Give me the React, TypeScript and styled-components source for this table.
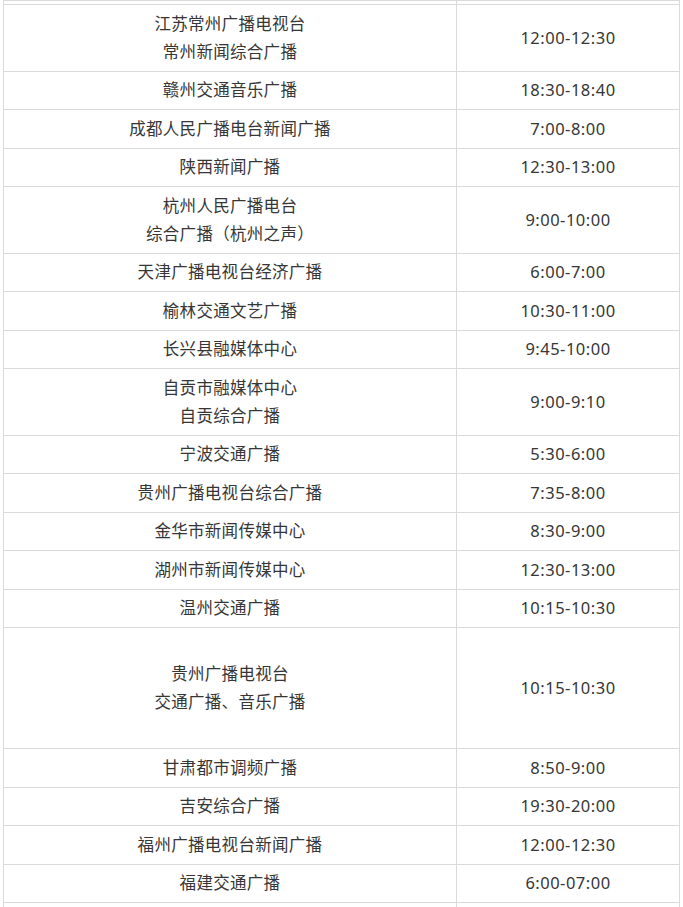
import React from 'react';
import styled, {createGlobalStyle} from 'styled-components';

const GlobalStyle = createGlobalStyle`
  html, body {
    margin: 0;
    padding: 0;
    background: #ffffff;
  }
  body {
    font-family: "Noto Sans", "Noto Sans CJK SC", sans-serif;
  }
`;

const Page = styled.div`
  padding: 0 4px 0 3px;
  height: 907px;
  overflow: hidden;
  box-sizing: border-box;
`;

const Table = styled.table`
  width: 676px;
  border-collapse: collapse;
  table-layout: fixed;
  color: #363636;
  font-size: 16.5px;
  line-height: 28px;
`;

const Cell = styled.td<{ $tall?: boolean; $cut?: boolean }>`
  border: 1px solid #dadada;
  text-align: center;
  vertical-align: middle;
  padding: ${({ $cut }) => ($cut ? '0' : '4.75px 4px')};
  height: ${({ $tall, $cut }) => ($cut ? '4px' : $tall ? '121px' : 'auto')};
  box-sizing: border-box;
`;

const NameCell = styled(Cell)`
  width: 453px;
  letter-spacing: 0.3px;
`;

const TimeCell = styled(Cell)`
  width: 223px;
  letter-spacing: 0.5px;
`;

const Line = styled.div`
  white-space: nowrap;
`;

type Station = { name: string[]; time: string; tall?: boolean };

const stations: Station[] = [
  { name: ['江苏常州广播电视台', '常州新闻综合广播'], time: '12:00-12:30' },
  { name: ['赣州交通音乐广播'], time: '18:30-18:40' },
  { name: ['成都人民广播电台新闻广播'], time: '7:00-8:00' },
  { name: ['陕西新闻广播'], time: '12:30-13:00' },
  { name: ['杭州人民广播电台', '综合广播（杭州之声）'], time: '9:00-10:00' },
  { name: ['天津广播电视台经济广播'], time: '6:00-7:00' },
  { name: ['榆林交通文艺广播'], time: '10:30-11:00' },
  { name: ['长兴县融媒体中心'], time: '9:45-10:00' },
  { name: ['自贡市融媒体中心', '自贡综合广播'], time: '9:00-9:10' },
  { name: ['宁波交通广播'], time: '5:30-6:00' },
  { name: ['贵州广播电视台综合广播'], time: '7:35-8:00' },
  { name: ['金华市新闻传媒中心'], time: '8:30-9:00' },
  { name: ['湖州市新闻传媒中心'], time: '12:30-13:00' },
  { name: ['温州交通广播'], time: '10:15-10:30' },
  { name: ['贵州广播电视台', '交通广播、音乐广播'], time: '10:15-10:30', tall: true },
  { name: ['甘肃都市调频广播'], time: '8:50-9:00' },
  { name: ['吉安综合广播'], time: '19:30-20:00' },
  { name: ['福州广播电视台新闻广播'], time: '12:00-12:30' },
  { name: ['福建交通广播'], time: '6:00-07:00' },
];

export default function App() {
  return (
    <>
      <GlobalStyle />
      <Page>
        <Table>
          <tbody>
            <tr>
              <NameCell $cut />
              <TimeCell $cut />
            </tr>
            {stations.map((s, i) => (
              <tr key={i}>
                <NameCell $tall={s.tall}>
                  {s.name.map((n, j) => (
                    <Line key={j}>{n}</Line>
                  ))}
                </NameCell>
                <TimeCell $tall={s.tall}>{s.time}</TimeCell>
              </tr>
            ))}
            <tr>
              <NameCell>&nbsp;</NameCell>
              <TimeCell>&nbsp;</TimeCell>
            </tr>
          </tbody>
        </Table>
      </Page>
    </>
  );
}
